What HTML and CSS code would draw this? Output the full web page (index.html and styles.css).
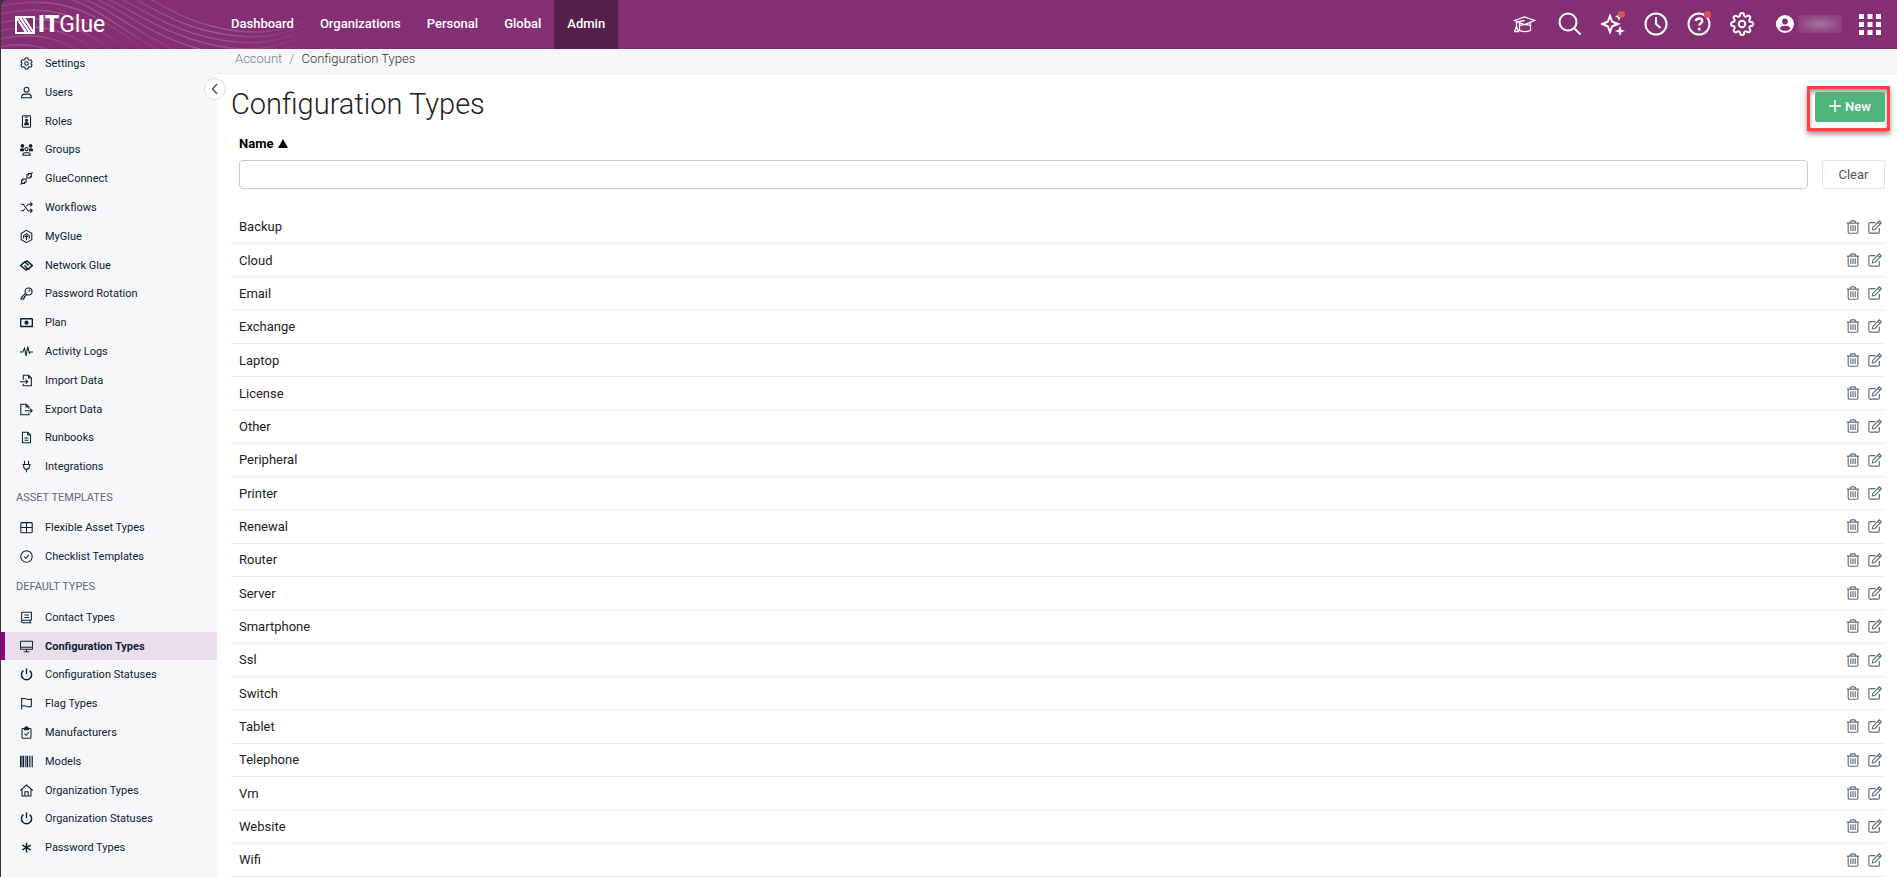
FILE: index.html
```html
<!DOCTYPE html>
<html lang="en">
  <head>
    <meta charset="UTF-8" />
    <meta name="viewport" content="width=device-width, initial-scale=1.0" />
    <title>Configuration Types</title>
    <link rel="stylesheet" href="styles.css" />
  </head>
  <body>
    <!-- Icon sprite -->
    <svg class="sprite" aria-hidden="true">
      <symbol id="i-gear" viewBox="0 0 16 16">
        <path d="M6.5 1.2h3l.6 2 1.3.7 2-.5 1.500 2.600-1.400 1.500v1l1.400 1.500-1.500 2.600-2-.5-1.300.7-.6 2h-3l-.6-2-1.300-.7-2 .5L1.100 10l1.400-1.500v-1L1.100 6l1.500-2.600 2 .5 1.300-.7z" />
        <circle cx="8" cy="8" r="2.2" />
      </symbol>
      <symbol id="i-user" viewBox="0 0 16 16">
        <circle cx="8" cy="4.5" r="3" />
        <path d="M2 14.5c0-3 1.8-4.5 4-4.5h4c2.2 0 4 1.5 4 4.5z" />
      </symbol>
      <symbol id="i-badge" viewBox="0 0 16 16">
        <rect x="3" y="1" width="10" height="14" rx="1" />
        <path d="M6 2.5h4" />
        <circle class="fill" cx="8" cy="6.5" r="1.3" />
        <path class="fill" d="M5.8 12c0-2 .7-2.700 2.200-2.700s2.200.7 2.200 2.700z" />
      </symbol>
      <symbol id="i-groups" viewBox="0 0 16 16">
        <circle class="fill flat" cx="3" cy="3.5" r="2.300" />
        <circle class="fill flat" cx="13" cy="3.5" r="2.300" />
        <path class="fill flat" d="M-.5 10c0-2.500 1.500-3.500 3.500-3.500 1 0 1.500.3 2 .8L4.800 10zM16.500 10c0-2.500-1.500-3.500-3.500-3.500-1 0-1.500.3-2 .8l.2 2.700z" />
        <circle cx="8" cy="7.5" r="2" />
        <path d="M3.500 15c0-2 1-3 2.500-3h4c1.500 0 2.500 1 2.500 3z" />
      </symbol>
      <symbol id="i-connect" viewBox="0 0 16 16">
        <path d="M8.500 3.500h2V2H14v4h-1.500v1.500H8.500zM14 2l1.500-1.500M7.500 12.500h-2V14H2v-4h1.500V8.500h4zM2 14L.5 15.500" />
      </symbol>
      <symbol id="i-shuffle" viewBox="0 0 16 16">
        <path d="M1 4h3l6 8h5M1 12h3l1.800-2.300M8 6.500L10 4h5M12.500 1.500L15 4l-2.500 2.500M12.500 9.500L15 12l-2.500 2.500" />
      </symbol>
      <symbol id="i-myglue" viewBox="0 0 16 16">
        <path d="M8 .5l6.500 3.700v7.600L8 15.500l-6.500-3.700V4.200z" />
        <path d="M4.500 10.500V7L8 4.500 11.500 7v3.500M8 6.500v6M6 8.500l2-1.500 2 1.500" />
      </symbol>
      <symbol id="i-network" viewBox="0 0 16 16">
        <path class="thick" d="M10 11.500l-2.500 2L.8 8 6 3.500 10.500 8M6 4.500l2.500-2L15.200 8 10 12.500 5.500 8" />
      </symbol>
      <symbol id="i-key" viewBox="0 0 16 16">
        <circle cx="10.500" cy="5.500" r="4.300" />
        <path d="M6.800 7.800L1.500 13v2H4v-1.500h1.500V12L8.500 9.300" />
        <circle class="fill flat" cx="11.700" cy="4.300" r="1.100" />
      </symbol>
      <symbol id="i-plan" viewBox="0 0 16 16">
        <rect class="thick" x=".8" y="3.500" width="14.400" height="9.500" rx="1" />
        <circle class="fill flat" cx="8" cy="8.200" r="2.600" />
      </symbol>
      <symbol id="i-activity" viewBox="0 0 16 16">
        <path d="M0 8.500h3.500L5.500 4l2 9.500L9.500 2l2 8 1-1.500H16" />
      </symbol>
      <symbol id="i-import" viewBox="0 0 16 16">
        <path d="M4 7V1.500h6.500L14 5v9.500H4V12M10.500 1.500V5H14M0 9.500h9M7 7l2.500 2.500L7 12" />
      </symbol>
      <symbol id="i-export" viewBox="0 0 16 16">
        <path d="M11 7V5L7.500 1.500H1v13h10V12M7.500 1.500V5H11M6 9.500h9M12.500 7L15 9.500 12.500 12" />
      </symbol>
      <symbol id="i-doc" viewBox="0 0 16 16">
        <path d="M3 1.500h6.500L13 5v9.500H3zM9.500 1.500V5H13M5.500 8.500h5M5.500 11.500h5" />
      </symbol>
      <symbol id="i-plug" viewBox="0 0 16 16">
        <path d="M5.500 1v4M10.500 1v4M3 5.500h10M4.500 5.500v2.500c0 2 1.500 3.500 3.500 3.500s3.500-1.500 3.500-3.500V5.500M8 11.500V15" />
      </symbol>
      <symbol id="i-table" viewBox="0 0 16 16">
        <rect x="1" y="2" width="14" height="12.500" rx="1" />
        <path d="M8 2v12.500M1 8h14" />
      </symbol>
      <symbol id="i-check" viewBox="0 0 16 16">
        <circle cx="8" cy="8" r="7" />
        <path d="M5 8.200l2.200 2L11 6" />
      </symbol>
      <symbol id="i-contact" viewBox="0 0 16 16">
        <path d="M14 11.500v-10H3.500c-.8 0-1.500.5-1.500 1.300v10.400c0 .8.700 1.300 1.500 1.300h10.500M2.500 11.500H14M12.500 11.500v3M5.500 5h5.500M5.500 8h5.500" />
      </symbol>
      <symbol id="i-monitor" viewBox="0 0 16 16">
        <rect x=".5" y="1.500" width="15" height="10" rx="1" />
        <path d="M1 9h14M8 11.500V14M4.500 14.500h7" />
      </symbol>
      <symbol id="i-power" viewBox="0 0 16 16">
        <path class="thick" d="M4.200 3.200a6.300 6.300 0 1 0 7.600 0M8 .5v7" />
      </symbol>
      <symbol id="i-flag" viewBox="0 0 16 16">
        <path d="M2 1v14.500M2 2.500c2-1 3.500-1 6 0s4 1 6 0v9c-2 1-3.500 1-6 0s-4-1-6 0" />
      </symbol>
      <symbol id="i-clipboard" viewBox="0 0 16 16">
        <rect x="2.500" y="3" width="11" height="12" rx="1" />
        <path class="fill" d="M5.500 4.500v-2h1a1.500 1.500 0 0 1 3 0h1v2z" />
        <path d="M5.500 9.500l2 2 3.500-4" />
      </symbol>
      <symbol id="i-barcode" viewBox="0 0 16 16">
        <path class="fill flat" d="M0 1h2v14H0zM3 1h2v14H3zM6 1h1v14H6zM8 1h2v14H8zM11 1h1v14h-1zM13 1h1v14h-1zM15 1h1v14h-1z" />
      </symbol>
      <symbol id="i-home" viewBox="0 0 16 16">
        <path d="M.3 8L8 1.300 15.700 8M2.500 6.500v8.200h11V6.500M6 14.500v-5h4v5" />
      </symbol>
      <symbol id="i-asterisk" viewBox="0 0 16 16">
        <path class="thick" d="M8 2v12M2.800 5l10.400 6M13.200 5L2.800 11" />
      </symbol>
      <symbol id="i-trash" viewBox="0 0 16 16">
        <path d="M1 3.500h14M5 3.500V2l1-1h4l1 1v1.500M2.500 3.500V14l1 1.200h9l1-1.200V3.500M5.500 6v6.500M8 6v6.500M10.500 6v6.500" />
      </symbol>
      <symbol id="i-edit" viewBox="0 0 16 16">
        <path d="M8.500 3H2.300C1.500 3 1 3.500 1 4.300v9.400c0 .8.500 1.300 1.300 1.300h9.400c.8 0 1.300-.5 1.300-1.300V9" />
        <path d="M5.500 8.500L13 1l2.300 2.300-7.500 7.500-2.800.5zM11.300 2.700L13.600 5" />
      </symbol>
    </svg>

    <div class="app">
      <header class="topbar">
        <svg class="waves" viewBox="0 0 320 49" aria-hidden="true">
          <defs>
            <linearGradient id="fade">
              <stop offset="0" stop-color="#fff" stop-opacity=".1" />
              <stop offset=".45" stop-color="#fff" stop-opacity=".2" />
              <stop offset="1" stop-color="#fff" stop-opacity="0" />
            </linearGradient>
          </defs>
          <g fill="none" stroke="url(#fade)" stroke-width="1.4">
            <path d="M0 47C20 42 44 46 56 54" />
            <path d="M0 39C30 32 56 36 82 54" />
            <path d="M0 31C36 22 64 28 100 54" />
            <path d="M0 23C42 13 72 20 116 54" />
            <path d="M0 14C46 4 80 12 132 54" />
            <path d="M0 6C50-4 88 4 148 54" />
            <path d="M60-3C90 2 120 30 164 54" />
            <path d="M76-3C104 4 136 34 182 54" />
            <path d="M90-3C118 6 150 38 206 51S280 48 310 40" />
            <path d="M102-3C130 8 160 34 212 45S282 42 312 34" />
            <path d="M116-3C144 10 172 32 220 40S286 36 314 28" />
            <path d="M130-3C158 12 184 29 228 35S290 30 316 22" />
            <path d="M146-3C172 12 196 26 236 31S294 24 318 16" />
          </g>
        </svg>
        <a class="logo" href="#" aria-label="IT Glue home">
          <svg class="logo-mark" viewBox="0 0 20 20" aria-hidden="true">
            <path d="M0 1h20v18H0z" fill="#fff" />
            <path d="M2 5v12h7.500zM18 15V3h-7.500z" fill="#842f73" />
            <path d="M3.500 3l9.500 14M7 3l9.500 14" stroke="#842f73" stroke-width="1" />
          </svg>
          <span class="logo-text"><b>IT</b>Glue</span>
        </a>
        <nav class="main-nav">
          <a href="#">Dashboard</a>
          <a href="#">Organizations</a>
          <a href="#">Personal</a>
          <a href="#">Global</a>
          <a href="#" class="active">Admin</a>
        </nav>
        <div class="tools">
          <button class="tool academy" aria-label="Academy">
            <svg viewBox="0 0 24 24"><path class="thin" d="M2.500 8.500L12.500 5l10 3.500-10 4zM12.500 8.500L4.500 10v4.500L2.500 19.500h4l-2-5M7.500 11v2.500c3-1 8-1 11 0V11M7.500 13.500v5c3 1.300 8 1.300 11 0v-5" /></svg>
          </button>
          <button class="tool" aria-label="Search">
            <svg viewBox="0 0 24 24"><circle cx="10" cy="10" r="8.500" /><path d="M16 16l6.500 6.500" /></svg>
          </button>
          <button class="tool" aria-label="Copilot">
            <svg viewBox="0 0 24 24"><path d="M9 4l2.200 5.800L17 12l-5.800 2.200L9 20l-2.200-5.800L1 12l5.800-2.200z" /><path class="solid" d="M18 0l1.200 3.300L22 4.500l-2.800 1.200L18 9l-1.200-3.300L14 4.500l2.800-1.200zM19 14l1.500 3.700L24 19l-3.500 1.300L19 24l-1.500-3.700L14 19l3.500-1.300z" /></svg>
            <span class="dot"></span>
          </button>
          <button class="tool" aria-label="Recent">
            <svg viewBox="0 0 24 24"><circle cx="12" cy="12" r="10.500" /><path d="M12 5v7l4.500 4" /></svg>
          </button>
          <button class="tool" aria-label="Help">
            <svg viewBox="0 0 24 24"><circle cx="12" cy="12" r="10.500" /><path class="bold" d="M8.800 9c.3-1.800 1.500-2.600 3.200-2.600s3.200 1 3.200 2.700c0 2.200-3 2.400-3 4.500" /><circle class="solid" cx="12.200" cy="17" r="1.500" /></svg>
            <span class="dot"></span>
          </button>
          <button class="tool" aria-label="Settings">
            <svg viewBox="0 0 24 24"><circle cx="12" cy="12" r="3.200" /><path d="M19.400 15a1.650 1.650 0 0 0 .33 1.820l.06.06a2 2 0 0 1 0 2.830 2 2 0 0 1-2.830 0l-.06-.06a1.650 1.650 0 0 0-1.820-.33 1.650 1.650 0 0 0-1 1.510V21a2 2 0 0 1-2 2 2 2 0 0 1-2-2v-.09A1.650 1.650 0 0 0 9 19.400a1.650 1.650 0 0 0-1.820.33l-.06.06a2 2 0 0 1-2.830 0 2 2 0 0 1 0-2.830l.06-.06a1.650 1.650 0 0 0 .33-1.820 1.650 1.650 0 0 0-1.510-1H3a2 2 0 0 1-2-2 2 2 0 0 1 2-2h.09A1.650 1.650 0 0 0 4.600 9a1.650 1.650 0 0 0-.33-1.820l-.06-.06a2 2 0 0 1 0-2.830 2 2 0 0 1 2.830 0l.06.06a1.650 1.650 0 0 0 1.820.33H9a1.650 1.650 0 0 0 1-1.510V3a2 2 0 0 1 2-2 2 2 0 0 1 2 2v.09a1.650 1.650 0 0 0 1 1.510 1.650 1.650 0 0 0 1.820-.33l.06-.06a2 2 0 0 1 2.830 0 2 2 0 0 1 0 2.830l-.06.06a1.650 1.650 0 0 0-.33 1.820V9a1.650 1.650 0 0 0 1.510 1H21a2 2 0 0 1 2 2 2 2 0 0 1-2 2h-.09a1.650 1.650 0 0 0-1.510 1z" /></svg>
          </button>
          <button class="account" aria-label="Account menu">
            <svg viewBox="0 0 18 18"><circle cx="9" cy="9" r="9" fill="#fff" /><circle cx="9" cy="6.500" r="2.900" fill="#842f73" /><path d="M3.500 13.500c1-2.200 3-2.800 5.500-2.800s4.500.6 5.500 2.800c-1.300 1.600-3 2.300-5.500 2.300s-4.200-.7-5.500-2.300z" fill="#842f73" /></svg>
            <span class="account-name"></span>
          </button>
          <button class="tool" aria-label="Apps">
            <svg viewBox="0 0 24 24"><path class="solid" d="M1 2h5v5H1zM9.500 2h5v5h-5zM18 2h5v5h-5zM1 10h5v5H1zM9.500 10h5v5h-5zM18 10h5v5h-5zM1 18h5v5H1zM9.500 18h5v5h-5zM18 18h5v5h-5z" /></svg>
          </button>
        </div>
      </header>

      <div class="layout">
        <aside class="sidebar">
          <a href="#"><svg><use href="#i-gear" /></svg>Settings</a>
          <a href="#"><svg><use href="#i-user" /></svg>Users</a>
          <a href="#"><svg><use href="#i-badge" /></svg>Roles</a>
          <a href="#"><svg><use href="#i-groups" /></svg>Groups</a>
          <a href="#"><svg><use href="#i-connect" /></svg>GlueConnect</a>
          <a href="#"><svg><use href="#i-shuffle" /></svg>Workflows</a>
          <a href="#"><svg><use href="#i-myglue" /></svg>MyGlue</a>
          <a href="#"><svg><use href="#i-network" /></svg>Network Glue</a>
          <a href="#"><svg><use href="#i-key" /></svg>Password Rotation</a>
          <a href="#"><svg><use href="#i-plan" /></svg>Plan</a>
          <a href="#"><svg><use href="#i-activity" /></svg>Activity Logs</a>
          <a href="#"><svg><use href="#i-import" /></svg>Import Data</a>
          <a href="#"><svg><use href="#i-export" /></svg>Export Data</a>
          <a href="#"><svg><use href="#i-doc" /></svg>Runbooks</a>
          <a href="#"><svg><use href="#i-plug" /></svg>Integrations</a>
          <h2>ASSET TEMPLATES</h2>
          <a href="#"><svg><use href="#i-table" /></svg>Flexible Asset Types</a>
          <a href="#"><svg><use href="#i-check" /></svg>Checklist Templates</a>
          <h2>DEFAULT TYPES</h2>
          <a href="#"><svg><use href="#i-contact" /></svg>Contact Types</a>
          <a href="#" class="active"><svg><use href="#i-monitor" /></svg>Configuration Types</a>
          <a href="#"><svg><use href="#i-power" /></svg>Configuration Statuses</a>
          <a href="#"><svg><use href="#i-flag" /></svg>Flag Types</a>
          <a href="#"><svg><use href="#i-clipboard" /></svg>Manufacturers</a>
          <a href="#"><svg><use href="#i-barcode" /></svg>Models</a>
          <a href="#"><svg><use href="#i-home" /></svg>Organization Types</a>
          <a href="#"><svg><use href="#i-power" /></svg>Organization Statuses</a>
          <a href="#"><svg><use href="#i-asterisk" /></svg>Password Types</a>
          <button class="collapse" aria-label="Collapse sidebar">
            <svg viewBox="0 0 10 10"><path d="M7 0L2.500 5 7 10" /></svg>
          </button>
        </aside>

        <main class="main">
          <nav class="breadcrumb">
            <a href="#">Account</a><span class="sep">/</span><span>Configuration Types</span>
          </nav>
          <div class="content">
            <div class="title-row">
              <h1>Configuration Types</h1>
              <div class="highlight">
                <button class="btn-new">
                  <svg viewBox="0 0 12 12"><path d="M6 0v12M0 6h12" /></svg>New
                </button>
              </div>
            </div>
            <div class="filter">
              <label for="filter-name">Name
                <svg viewBox="0 0 10 9"><path d="M5 0l5 9H0z" /></svg>
              </label>
              <div class="filter-row">
                <input type="text" id="filter-name" />
                <button class="btn-clear">Clear</button>
              </div>
            </div>
            <table class="types">
              <tbody id="type-list"></tbody>
            </table>
          </div>
        </main>
      </div>
    </div>

    <script>
      const types = [
        "Backup", "Cloud", "Email", "Exchange", "Laptop", "License", "Other",
        "Peripheral", "Printer", "Renewal", "Router", "Server", "Smartphone",
        "Ssl", "Switch", "Tablet", "Telephone", "Vm", "Website", "Wifi",
      ];

      const list = document.getElementById("type-list");

      types.forEach((name) => {
        const row = document.createElement("tr");
        row.innerHTML = `
          <td>${name}</td>
          <td class="actions">
            <button aria-label="Delete ${name}"><svg><use href="#i-trash" /></svg></button>
            <button aria-label="Edit ${name}"><svg><use href="#i-edit" /></svg></button>
          </td>
        `;
        list.appendChild(row);
      });
    </script>
  </body>
</html>
```
FILE: styles.css
```css
* {
  box-sizing: border-box;
}

body {
  margin: 0;
  background-color: #38343a;
  font-family: Roboto, Arial, sans-serif;
  font-size: 13px;
  color: #222;
}

a {
  color: inherit;
  text-decoration: none;
}

button {
  font-family: inherit;
  padding: 0;
  border: none;
  background: none;
  cursor: pointer;
}

.sprite {
  display: none;
}

.app {
  display: flex;
  flex-direction: column;
  min-height: 100vh;
  margin-left: 1px;
}

/* Top bar */
.topbar {
  position: relative;
  display: flex;
  height: 49px;
  background-color: #842f73;
  border-top-left-radius: 6px;
  overflow: hidden;
  color: #fff;
}

.waves {
  position: absolute;
  top: 0;
  left: 0;
  width: 320px;
  height: 49px;
}

.logo {
  position: relative;
  display: flex;
  align-items: center;
  gap: 3px;
  width: 216px;
  padding-left: 14px;
}

.logo-mark {
  width: 20px;
  height: 20px;
}

.logo-text {
  font-size: 23px;
  font-weight: 400;
}

.logo-text b {
  font-weight: 900;
}

.main-nav {
  position: relative;
  display: flex;
  padding-left: 1px;
}

.main-nav a {
  display: flex;
  align-items: center;
  padding: 0 13px 2px;
  font-weight: 500;
}

.main-nav .active {
  background-color: #541f4a;
}

.tools {
  display: flex;
  align-items: center;
  gap: 19px;
  margin-left: auto;
  padding: 0 15px 2px 0;
}

.tool {
  position: relative;
  width: 24px;
  height: 24px;
}

.tool svg {
  display: block;
  width: 24px;
  height: 24px;
  fill: none;
  stroke: #fff;
  stroke-width: 2;
}

.academy {
  margin-right: 3px;
}

.tool .thin {
  stroke-width: 1.3;
}

.tool .bold {
  stroke-width: 2.5;
}

.tool .solid {
  fill: #fff;
  stroke: none;
}

.dot {
  position: absolute;
  top: -1px;
  right: 0;
  width: 7px;
  height: 7px;
  border-radius: 50%;
  background-color: #d9534f;
}

.account {
  display: flex;
  align-items: center;
  gap: 4px;
  margin: 0 -3px 0 3px;
}

.account svg {
  width: 18px;
  height: 18px;
}

.account-name {
  width: 44px;
  height: 18px;
  background: radial-gradient(closest-side, #a873a0, #8d4280);
}

/* Layout */
.layout {
  flex: 1;
  display: flex;
}

.sidebar {
  position: relative;
  display: flex;
  flex-direction: column;
  width: 216px;
  padding-bottom: 15px;
  background-color: #f5f7f9;
  font-size: 11px;
  color: #0b2233;
}

.sidebar a {
  flex: 1;
  display: flex;
  align-items: center;
  gap: 12px;
  min-height: 28px;
  padding-left: 19px;
}

.sidebar a svg {
  width: 13px;
  height: 13px;
  overflow: visible;
  fill: none;
  stroke: currentColor;
  stroke-width: 1.3;
}

.fill {
  fill: currentColor;
}

.flat {
  stroke: none;
}

.thick {
  stroke-width: 1.8;
}

.sidebar h2 {
  display: flex;
  align-items: center;
  height: 32px;
  margin: 0;
  padding-left: 15px;
  font-size: 11px;
  font-weight: 400;
  color: #5d6b78;
}

.sidebar .active {
  padding-left: 15px;
  border-left: 4px solid #950087;
  background-color: #ebdeec;
  font-weight: 700;
}

.collapse {
  position: absolute;
  top: 29px;
  right: -9px;
  display: flex;
  align-items: center;
  justify-content: center;
  width: 22px;
  height: 22px;
  border: 1px solid #ddd;
  border-radius: 50%;
  background-color: #fff;
}

.collapse svg {
  width: 10px;
  height: 10px;
  fill: none;
  stroke: #444;
  stroke-width: 1.3;
}

/* Page */
.main {
  flex: 1;
  display: flex;
  flex-direction: column;
  background-color: #fff;
}

.breadcrumb {
  display: flex;
  align-items: flex-start;
  height: 25px;
  padding: 2px 18px 0;
  border-bottom: 1px solid #e9e9e9;
  background-color: #f7f7f7;
  font-weight: 300;
  color: #333;
}

.breadcrumb a {
  color: #6c8593;
}

.breadcrumb .sep {
  margin: 0 7px;
  color: #888;
}

.content {
  flex: 1;
  display: flex;
  flex-direction: column;
  padding: 12px 12px 0 14px;
}

.title-row {
  display: flex;
  align-items: flex-start;
  justify-content: space-between;
  height: 49px;
}

h1 {
  margin: 0;
  font-size: 29px;
  font-weight: 300;
  line-height: 36px;
}

.highlight {
  margin-right: -5px;
  padding: 3px 2px 6px 5px;
  border: 3px solid #fd4144;
  box-shadow: 0 3px 5px rgba(0, 0, 0, 0.45), inset 0 3px 4px rgba(0, 0, 0, 0.4);
}

.btn-new {
  display: flex;
  align-items: center;
  justify-content: center;
  gap: 4px;
  width: 70px;
  height: 30px;
  padding-bottom: 2px;
  border-radius: 2px;
  background-color: #50b57d;
  font-size: 13px;
  font-weight: 500;
  color: #fff;
}

.btn-new svg {
  width: 12px;
  height: 12px;
  stroke: #fff;
  stroke-width: 1.5;
}

.filter {
  padding-left: 8px;
}

.filter label {
  display: flex;
  align-items: center;
  gap: 5px;
  height: 16px;
  margin-bottom: 9px;
  font-weight: 700;
  color: #000;
}

.filter label svg {
  width: 10px;
  height: 9px;
}

.filter-row {
  display: flex;
  gap: 14px;
  margin-bottom: 22px;
}

.filter-row input {
  flex: 1;
  height: 29px;
  padding: 4px 8px;
  border: 1px solid #c8c8c8;
  border-radius: 4px;
  font-family: inherit;
  font-size: 13px;
}

.btn-clear {
  width: 63px;
  height: 29px;
  border: 1px solid #e3e3e3;
  border-radius: 2px;
  background-color: #fff;
  font-size: 13px;
  color: #555;
}

.types {
  flex: 1;
  width: 100%;
  border-collapse: collapse;
}

.types td {
  padding: 0 0 0 8px;
  border-bottom: 1px solid #ebebeb;
}

.types .actions {
  padding-right: 3px;
  padding-bottom: 2px;
  text-align: right;
  white-space: nowrap;
}

.actions button {
  margin-left: 5px;
  vertical-align: middle;
}

.actions svg {
  display: block;
  width: 14px;
  height: 14px;
  fill: none;
  stroke: #5f6c78;
  stroke-width: 1.3;
}
```
